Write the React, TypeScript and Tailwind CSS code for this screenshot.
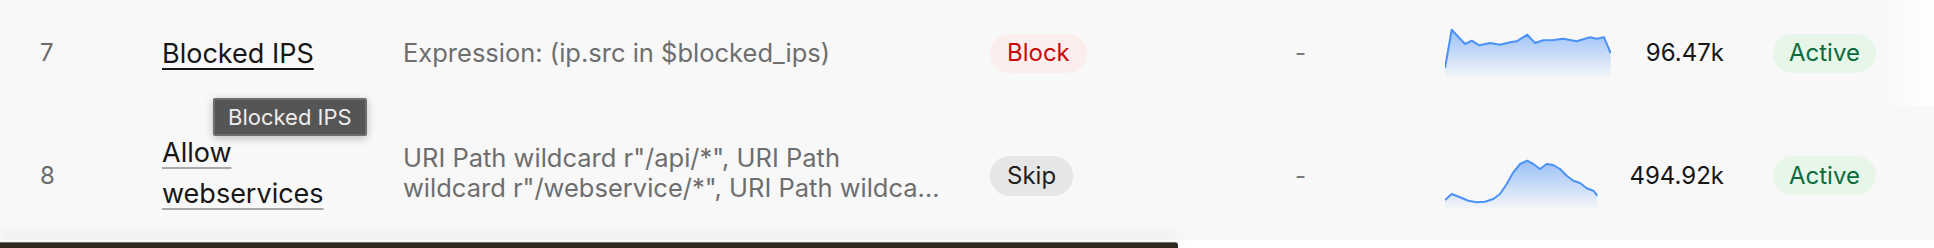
const chartOne: [number, number][] = [
  [0, 40], [6.7, 1.7], [20, 16], [26.7, 12.7], [34.3, 17.3], [45, 15], [55, 16.7],
  [65, 14.3], [71.7, 13.3], [82.3, 6.7], [90, 15], [98.3, 12.3], [108.3, 12],
  [118.3, 10.7], [131.7, 13.3], [145, 9.3], [151.7, 10.7], [159, 9.3], [165.7, 25],
];

const chartTwo: [number, number][] = [
  [0, 41], [6.7, 35], [15, 38.3], [23.3, 41.7], [31.7, 43.3], [40, 42.7], [48.3, 40],
  [55, 35], [61.7, 25], [68.3, 13.3], [75, 5], [82.3, 1.7], [88.3, 5], [95, 10],
  [101.7, 5], [108.3, 6], [115, 10], [121.7, 16.7], [128.3, 21.7], [135, 24],
  [141.7, 29.3], [148.3, 31.7], [152.3, 36.7],
];

type Rule = {
  index: number;
  name: string;
  hovered?: boolean;
  description: string[];
  action: 'Block' | 'Skip';
  points: [number, number][];
  requests: string;
  id: string;
};

const rules: Rule[] = [
  {
    index: 7,
    name: 'Blocked IPS',
    hovered: true,
    description: ['Expression: (ip.src in $blocked_ips)'],
    action: 'Block',
    points: chartOne,
    requests: '96.47k',
    id: 'a',
  },
  {
    index: 8,
    name: 'Allow webservices',
    description: [
      'URI Path wildcard r"/api/*", URI Path',
      'wildcard r"/webservice/*", URI Path wildcard r"/feeds/*"',
    ],
    action: 'Skip',
    points: chartTwo,
    requests: '494.92k',
    id: 'b',
  },
];

const Sparkline = ({ points, id, shift }: { points: [number, number][]; id: string; shift?: boolean }) => {
  const line = points.map(([x, y]) => `${x},${y}`).join(' ');
  const last = points[points.length - 1];
  const area = `0,50 ${line} ${last[0]},50`;
  return (
    <svg
      width="166"
      height="50"
      viewBox="0 0 166 50"
      className={shift ? 'mt-[16px]' : ''}
    >
      <defs>
        <linearGradient id={`fill-${id}`} x1="0" y1="0" x2="0" y2="1">
          <stop offset="0%" stopColor="#5b9bf8" stopOpacity="0.6" />
          <stop offset="100%" stopColor="#5b9bf8" stopOpacity="0.02" />
        </linearGradient>
      </defs>
      <polygon points={area} fill={`url(#fill-${id})`} />
      <polyline
        points={line}
        fill="none"
        stroke="#4b92f7"
        strokeWidth="2"
        strokeLinejoin="round"
      />
    </svg>
  );
};

const RuleRow = ({ rule, tall }: { rule: Rule; tall?: boolean }) => (
  <div className={`flex items-center ${tall ? 'h-[134px] pt-[5px]' : 'h-[106px]'}`}>
    <div className="w-[162px] flex-none pl-[40px] text-[24px] text-[#6b6b6b]">
      {rule.index}
    </div>
    <div className={`w-[241px] flex-none pr-[40px] ${tall ? 'mt-[-5px]' : ''}`}>
      <span
        className={`text-[27px] leading-[41px] text-[#161616] underline decoration-2 underline-offset-[5px] ${
          rule.hovered ? 'decoration-[#161616]' : 'decoration-[#a8a8a8]'
        }`}
      >
        {rule.name}
      </span>
    </div>
    <div className="w-[587px] flex-none">
      <div className={`w-[540px] text-[25.5px] leading-[30px] text-[#6e6e6e] ${tall ? 'mt-[-6px]' : ''}`}>
        {rule.description.map((text) => (
          <div key={text} className="truncate">
            {text}
          </div>
        ))}
      </div>
    </div>
    <div className="w-[305px] flex-none">
      {rule.action === 'Block' ? (
        <span className="inline-flex h-[39px] items-center rounded-full bg-[#fdeeee] px-[17px] text-[24px] text-[#c80a0a]">
          Block
        </span>
      ) : (
        <span className="inline-flex h-[40px] items-center rounded-full bg-[#e6e6e6] px-[17px] text-[24px] text-[#1f1f1f]">
          Skip
        </span>
      )}
    </div>
    <div className="w-[150px] flex-none text-[24px] text-[#7a7a7a]">-</div>
    <div className="w-[166px] flex-none">
      <Sparkline points={rule.points} id={rule.id} shift={tall} />
    </div>
    <div className="w-[113px] flex-none text-right text-[24px] text-[#161616]">
      {rule.requests}
    </div>
    <div className="flex-none pl-[49px]">
      <span className="inline-flex h-[39px] items-center rounded-full bg-[#e6f7ea] px-[16px] text-[24px] text-[#0d6b3c]">
        Active
      </span>
    </div>
  </div>
);

const App = () => {
  return (
    <div className="relative h-[248px] w-[1934px] overflow-hidden bg-white font-['Inter',sans-serif]">
      <div className="h-[240px] bg-[#f8f8f8]">
        <RuleRow rule={rules[0]} />
        <RuleRow rule={rules[1]} tall />
      </div>
      <div className="h-[8px] bg-white pt-[2px]">
        <div className="h-[6px] w-[1178px] rounded-tr-[3px] border-t border-[#6d6d6d] bg-[#2e2a1f] shadow-[0_-6px_14px_rgba(0,0,0,0.08)]" />
      </div>

      {/* fade on the right edge of the first row */}
      <div className="absolute right-0 top-0 h-[106px] w-[56px] bg-gradient-to-r from-[#f8f8f8]/0 to-white" />

      {/* tooltip */}
      <div className="absolute left-[213px] top-[98px] flex h-[38px] items-center rounded-[2px] border-2 border-[#6e6e6e] bg-[#555555] px-[13px] text-[22px] text-[#ededed] shadow-[0_2px_8px_rgba(0,0,0,0.25)]">
        Blocked IPS
      </div>
    </div>
  );
};

export default App;
